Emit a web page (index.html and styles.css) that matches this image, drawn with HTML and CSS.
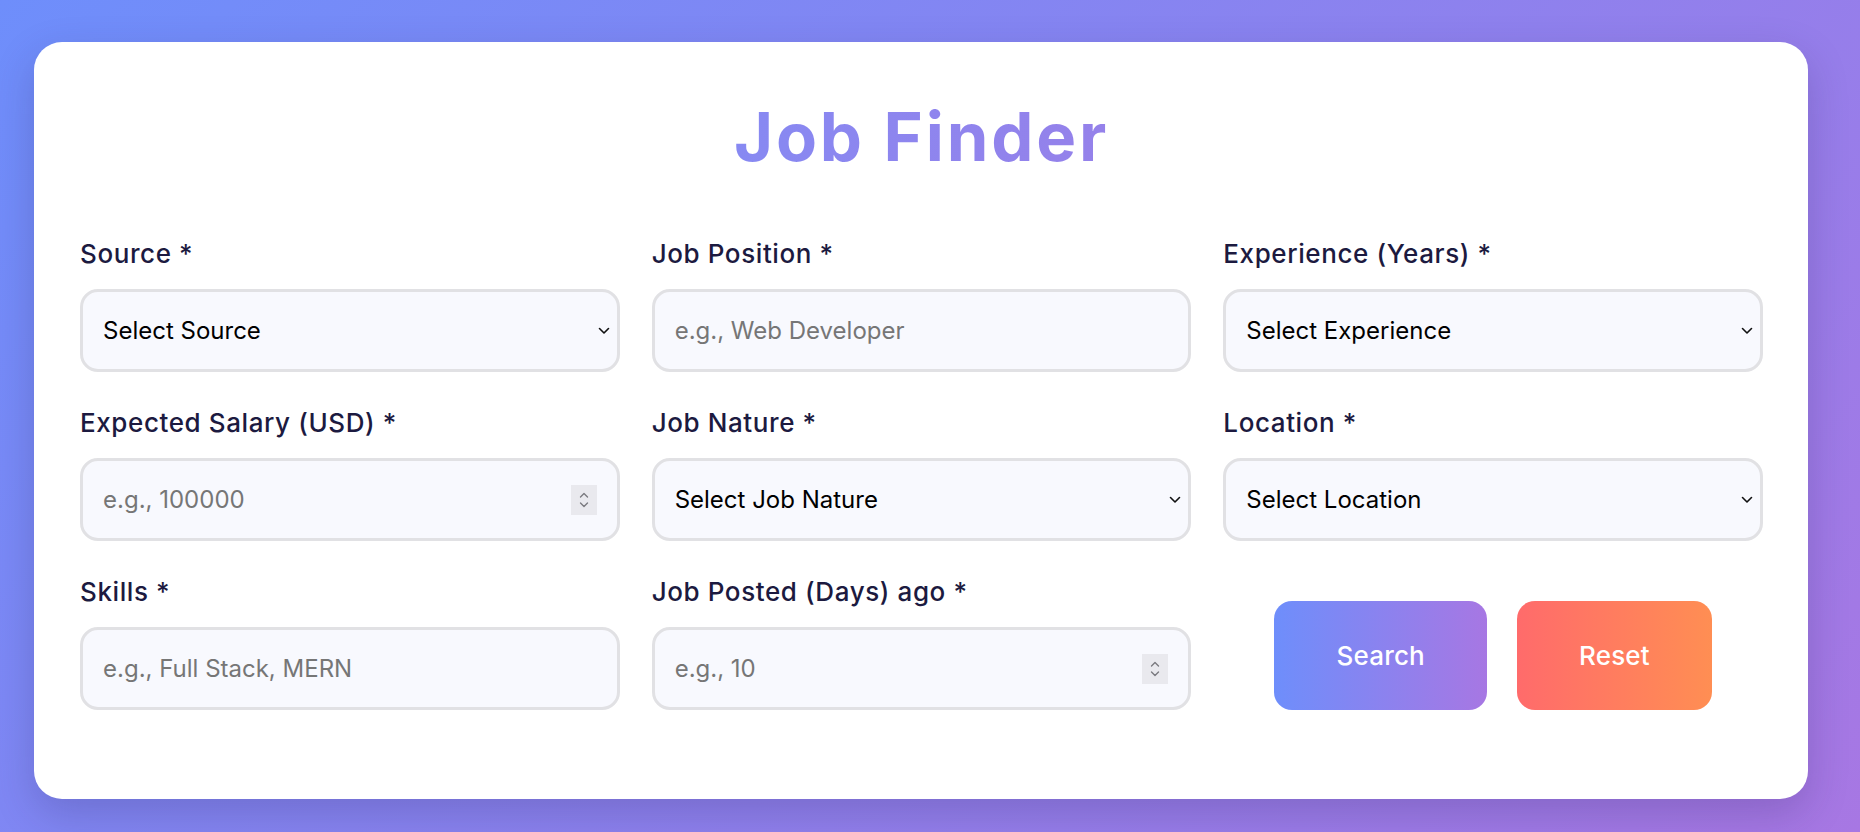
FILE: index.html
```html
<!DOCTYPE html>
<html lang="en">
<head>
<meta charset="utf-8">
<title>Job Finder</title>
<link rel="stylesheet" href="styles.css">
</head>
<body>
<div class="card">
  <h1 class="title">Job Finder</h1>
  <form class="form-grid">
    <div class="group">
      <label class="label">Source *</label>
      <div class="control">
        <select class="field select">
          <option>Select Source</option>
        </select>
        <svg class="chev" width="12" height="8" viewBox="0 0 12 8"><path d="M1.5 1.5 L6 6 L10.5 1.5" fill="none" stroke="#111" stroke-width="1.6" stroke-linecap="round" stroke-linejoin="round"/></svg>
      </div>
    </div>
    <div class="group">
      <label class="label">Job Position *</label>
      <div class="control">
        <input class="field" type="text" placeholder="e.g., Web Developer">
      </div>
    </div>
    <div class="group">
      <label class="label">Experience (Years) *</label>
      <div class="control">
        <select class="field select">
          <option>Select Experience</option>
        </select>
        <svg class="chev" width="12" height="8" viewBox="0 0 12 8"><path d="M1.5 1.5 L6 6 L10.5 1.5" fill="none" stroke="#111" stroke-width="1.6" stroke-linecap="round" stroke-linejoin="round"/></svg>
      </div>
    </div>
    <div class="group">
      <label class="label">Expected Salary (USD) *</label>
      <div class="control">
        <input class="field" type="number" placeholder="e.g., 100000">
        <span class="spin"><svg width="14" height="22" viewBox="0 0 14 22"><path d="M3.5 8 L7 4.5 L10.5 8 M3.5 14 L7 17.5 L10.5 14" fill="none" stroke="#7a7a80" stroke-width="1.4" stroke-linecap="round" stroke-linejoin="round"/></svg></span>
      </div>
    </div>
    <div class="group">
      <label class="label">Job Nature *</label>
      <div class="control">
        <select class="field select">
          <option>Select Job Nature</option>
        </select>
        <svg class="chev" width="12" height="8" viewBox="0 0 12 8"><path d="M1.5 1.5 L6 6 L10.5 1.5" fill="none" stroke="#111" stroke-width="1.6" stroke-linecap="round" stroke-linejoin="round"/></svg>
      </div>
    </div>
    <div class="group">
      <label class="label">Location *</label>
      <div class="control">
        <select class="field select">
          <option>Select Location</option>
        </select>
        <svg class="chev" width="12" height="8" viewBox="0 0 12 8"><path d="M1.5 1.5 L6 6 L10.5 1.5" fill="none" stroke="#111" stroke-width="1.6" stroke-linecap="round" stroke-linejoin="round"/></svg>
      </div>
    </div>
    <div class="group">
      <label class="label">Skills *</label>
      <div class="control">
        <input class="field" type="text" placeholder="e.g., Full Stack, MERN">
      </div>
    </div>
    <div class="group">
      <label class="label">Job Posted (Days) ago *</label>
      <div class="control">
        <input class="field" type="number" placeholder="e.g., 10">
        <span class="spin"><svg width="14" height="22" viewBox="0 0 14 22"><path d="M3.5 8 L7 4.5 L10.5 8 M3.5 14 L7 17.5 L10.5 14" fill="none" stroke="#7a7a80" stroke-width="1.4" stroke-linecap="round" stroke-linejoin="round"/></svg></span>
      </div>
    </div>
    <div class="actions">
      <button type="button" class="btn btn-search">Search</button>
      <button type="button" class="btn btn-reset">Reset</button>
    </div>
  </form>
</div>
</body>
</html>
```
FILE: styles.css
```css
* { box-sizing: border-box; }
html, body { margin: 0; }
body {
  min-height: 832px;
  padding: 42px 52px 32px 34px;
  background: linear-gradient(135deg, #6e8efb 0%, #a777e3 100%);
  font-family: Inter, "Noto Sans", sans-serif;
}
.card {
  background: #ffffff;
  border-radius: 28px;
  box-shadow: 0 15px 40px rgba(40, 30, 90, 0.22);
  padding: 55px 45px 89px 46px;
}
.title {
  margin: 0 auto 61px;
  width: max-content;
  text-align: center;
  font-size: 67px;
  line-height: 80px;
  font-weight: 700;
  letter-spacing: 2.8px;
  background: linear-gradient(90deg, #8789f2, #9581ea);
  -webkit-background-clip: text;
  background-clip: text;
  color: transparent;
}
.form-grid {
  display: grid;
  grid-template-columns: repeat(3, 1fr);
  column-gap: 32px;
  row-gap: 35px;
}
.group {
  display: flex;
  flex-direction: column;
}
.label {
  font-size: 26px;
  line-height: 32px;
  font-weight: 500;
  letter-spacing: 0.6px;
  color: #1c1a40;
  margin-bottom: 19px;
}
.control {
  position: relative;
}
.field {
  display: block;
  height: 83px;
  width: 100%;
  border: 3px solid #e1e1e4;
  border-radius: 18px;
  background-color: #f8f9fe;
  padding: 0 16px 0 20px;
  font-family: Inter, "Noto Sans", sans-serif;
  font-size: 24px;
  color: #000;
  outline: none;
  margin: 0;
}
.field::placeholder { color: #767676; }
.select {
  -webkit-appearance: none;
  appearance: none;
  padding-right: 40px;
}
input[type="number"] { -moz-appearance: textfield; }
input[type="number"]::-webkit-inner-spin-button,
input[type="number"]::-webkit-outer-spin-button {
  -webkit-appearance: none;
  margin: 0;
}
.chev {
  position: absolute;
  right: 10px;
  top: 50%;
  margin-top: -4px;
  pointer-events: none;
}
.spin {
  position: absolute;
  right: 23px;
  top: 50%;
  width: 26px;
  height: 30px;
  margin-top: -15px;
  background: #e9e9ee;
  display: flex;
  align-items: center;
  justify-content: center;
  pointer-events: none;
}
.actions {
  display: flex;
  justify-content: center;
  align-items: flex-end;
  gap: 30px;
}
.btn {
  height: 109px;
  padding: 0 62px;
  border: none;
  border-radius: 18px;
  color: #fff;
  font-family: Inter, "Noto Sans", sans-serif;
  font-size: 26px;
  font-weight: 500;
  letter-spacing: 0.2px;
  cursor: pointer;
}
.btn-search { background: linear-gradient(90deg, #6e8efb, #a777e3); }
.btn-reset { background: linear-gradient(90deg, #ff6b6b, #ff8e53); }
```
